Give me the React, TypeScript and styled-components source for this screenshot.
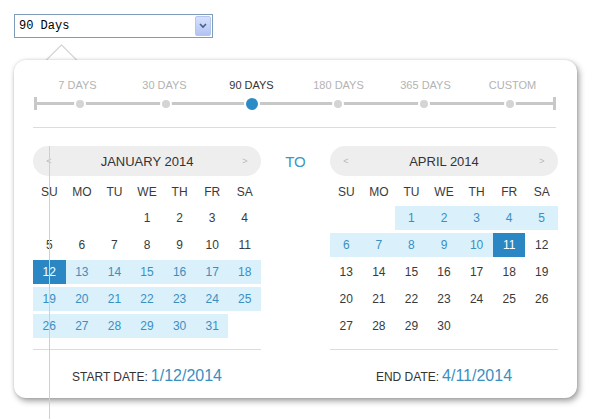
import styled, { createGlobalStyle } from "styled-components";

const GlobalStyle = createGlobalStyle`
  html {
    background: #fff;
  }
  html, body {
    margin: 0;
    overflow: hidden;
  }
  body {
    font-family: "Liberation Sans", Arial, sans-serif;
    color: #333;
  }
`;

const Page = styled.div`
  position: relative;
  padding: 14px;
  height: 419px;
  box-sizing: border-box;
`;

const GuideLine = styled.div`
  position: absolute;
  left: 49px;
  top: 146px;
  width: 1px;
  height: 273px;
  background: #cfcfcf;
  z-index: 5;
`;

const Select = styled.div`
  display: flex;
  align-items: center;
  justify-content: space-between;
  width: 199px;
  height: 24px;
  box-sizing: border-box;
  border: 1px solid #7f9db9;
  padding: 0 1px 0 4px;
  font-family: "Liberation Mono", "Courier New", monospace;
  font-size: 12px;
  color: #000;
  background: #fff;
`;

const SelectButton = styled.div`
  display: flex;
  align-items: center;
  justify-content: center;
  width: 16px;
  height: 20px;
  box-sizing: border-box;
  border: 1px solid #b4c6ee;
  border-radius: 2px;
  background: linear-gradient(#d6e1fd, #b2c4f4);
`;

const Popover = styled.div`
  position: relative;
  margin-top: 22px;
  width: 563px;
  box-sizing: border-box;
  padding: 18px 19px 11px;
  background: #fff;
  border-radius: 12px;
  box-shadow: 2px 3px 6px rgba(0, 0, 0, 0.38), 0 0 3px rgba(0, 0, 0, 0.12);

  &::before {
    content: "";
    position: absolute;
    z-index: -1;
    left: 36px;
    top: -11px;
    width: 21px;
    height: 21px;
    background: #fff;
    border: 1px solid #d0d0d0;
    box-shadow: 0 0 2px rgba(0, 0, 0, 0.08);
    transform: rotate(45deg);
  }
`;

const Slider = styled.div`
  width: 522px;
  margin-left: 1px;
`;

const SliderLabels = styled.div`
  display: grid;
  grid-template-columns: repeat(6, 1fr);
`;

const SliderLabel = styled.div<{ $active?: boolean }>`
  text-align: center;
  font-size: 11px;
  line-height: 14px;
  color: ${(p) => (p.$active ? "#333" : "#b3b3b3")};
`;

const Track = styled.div`
  display: grid;
  grid-template-columns: repeat(6, 1fr);
  align-items: center;
  justify-items: center;
  height: 13px;
  margin-top: 5px;
  box-sizing: border-box;
  border-left: 3px solid #c8c8c8;
  border-right: 3px solid #c8c8c8;
  background: linear-gradient(#c8c8c8, #c8c8c8) center / 100% 3px no-repeat;
`;

const Dot = styled.div<{ $active?: boolean }>`
  width: ${(p) => (p.$active ? 12 : 8)}px;
  height: ${(p) => (p.$active ? 12 : 8)}px;
  border-radius: 50%;
  background: ${(p) => (p.$active ? "#2b8bc6" : "#d4d4d4")};
  box-shadow: 0 0 0 2px #fff;
`;

const Divider = styled.div`
  width: 523px;
  height: 1px;
  margin-top: 17px;
  background: #dcdcdc;
`;

const Calendars = styled.div`
  display: grid;
  grid-template-columns: 228px 1fr 228px;
  margin-top: 18px;
`;

const Middle = styled.div`
  display: flex;
  justify-content: center;
  height: 30px;
  align-items: center;
  font-size: 15px;
  color: #3c97c2;
`;

const MonthHeader = styled.div`
  display: flex;
  align-items: center;
  justify-content: space-between;
  height: 30px;
  padding: 0 12px;
  border-radius: 15px;
  background: #eeeeee;
  font-size: 13px;
  color: #333;
`;

const NavArrow = styled.span`
  font-size: 9px;
  color: #b8b8b8;
  width: 8px;
  text-align: center;
`;

const DayGrid = styled.div`
  display: grid;
  grid-template-columns: repeat(7, 1fr);
  grid-auto-rows: 24px;
  row-gap: 3px;
  margin-top: 3px;
`;

const WeekDay = styled.div`
  display: flex;
  align-items: center;
  justify-content: center;
  padding-top: 2px;
  font-size: 12px;
  color: #3a3a3a;
`;

type DayKind = "plain" | "range" | "selected";

const Day = styled.div<{ $kind: DayKind }>`
  display: flex;
  align-items: center;
  justify-content: center;
  font-size: 12px;
  background: ${(p) =>
    p.$kind === "selected" ? "#2a87c3" : p.$kind === "range" ? "#daf0fb" : "transparent"};
  color: ${(p) =>
    p.$kind === "selected" ? "#fff" : p.$kind === "range" ? "#3a8fc1" : "#3a3a3a"};
`;

const Footer = styled.div`
  margin-top: 11px;
  border-top: 1px solid #dcdcdc;
  padding-top: 16px;
  display: flex;
  justify-content: center;
  align-items: baseline;
  line-height: 19px;
`;

const FooterLabel = styled.span`
  font-size: 12px;
  color: #333;
  margin-right: 3px;
`;

const FooterValue = styled.span`
  font-size: 16px;
  color: #3a8fc1;
`;

const WEEKDAYS = ["SU", "MO", "TU", "WE", "TH", "FR", "SA"];
const PRESETS = ["7 DAYS", "30 DAYS", "90 DAYS", "180 DAYS", "365 DAYS", "CUSTOM"];

type CalendarProps = {
  title: string;
  offset: number;
  days: number;
  rangeFrom: number;
  rangeTo: number;
  selected: number;
  label: string;
  value: string;
};

function Calendar({ title, offset, days, rangeFrom, rangeTo, selected, label, value }: CalendarProps) {
  const kindOf = (d: number): DayKind =>
    d === selected ? "selected" : d >= rangeFrom && d <= rangeTo ? "range" : "plain";

  return (
    <div>
      <MonthHeader>
        <NavArrow>&lt;</NavArrow>
        <span>{title}</span>
        <NavArrow>&gt;</NavArrow>
      </MonthHeader>
      <DayGrid>
        {WEEKDAYS.map((w) => (
          <WeekDay key={w}>{w}</WeekDay>
        ))}
        {Array.from({ length: offset }, (_, i) => (
          <Day key={"e" + i} $kind="plain" />
        ))}
        {Array.from({ length: days }, (_, i) => (
          <Day key={i} $kind={kindOf(i + 1)}>
            {i + 1}
          </Day>
        ))}
      </DayGrid>
      <Footer>
        <FooterLabel>{label}</FooterLabel>
        <FooterValue>{value}</FooterValue>
      </Footer>
    </div>
  );
}

export default function App() {
  return (
    <>
      <GlobalStyle />
      <Page>
        <Select>
          <span>90 Days</span>
          <SelectButton>
            <svg width="8" height="6" viewBox="0 0 8 6">
              <polyline points="1,1 4,4 7,1" fill="none" stroke="#4a5f86" strokeWidth="1.6" />
            </svg>
          </SelectButton>
        </Select>
        <Popover>
          <Slider>
            <SliderLabels>
              {PRESETS.map((p) => (
                <SliderLabel key={p} $active={p === "90 DAYS"}>
                  {p}
                </SliderLabel>
              ))}
            </SliderLabels>
            <Track>
              {PRESETS.map((p) => (
                <Dot key={p} $active={p === "90 DAYS"} />
              ))}
            </Track>
          </Slider>
          <Divider />
          <Calendars>
            <Calendar
              title="JANUARY 2014"
              offset={3}
              days={31}
              rangeFrom={12}
              rangeTo={31}
              selected={12}
              label="START DATE:"
              value="1/12/2014"
            />
            <Middle>TO</Middle>
            <Calendar
              title="APRIL 2014"
              offset={2}
              days={30}
              rangeFrom={1}
              rangeTo={11}
              selected={11}
              label="END DATE:"
              value="4/11/2014"
            />
          </Calendars>
        </Popover>
        <GuideLine />
      </Page>
    </>
  );
}
